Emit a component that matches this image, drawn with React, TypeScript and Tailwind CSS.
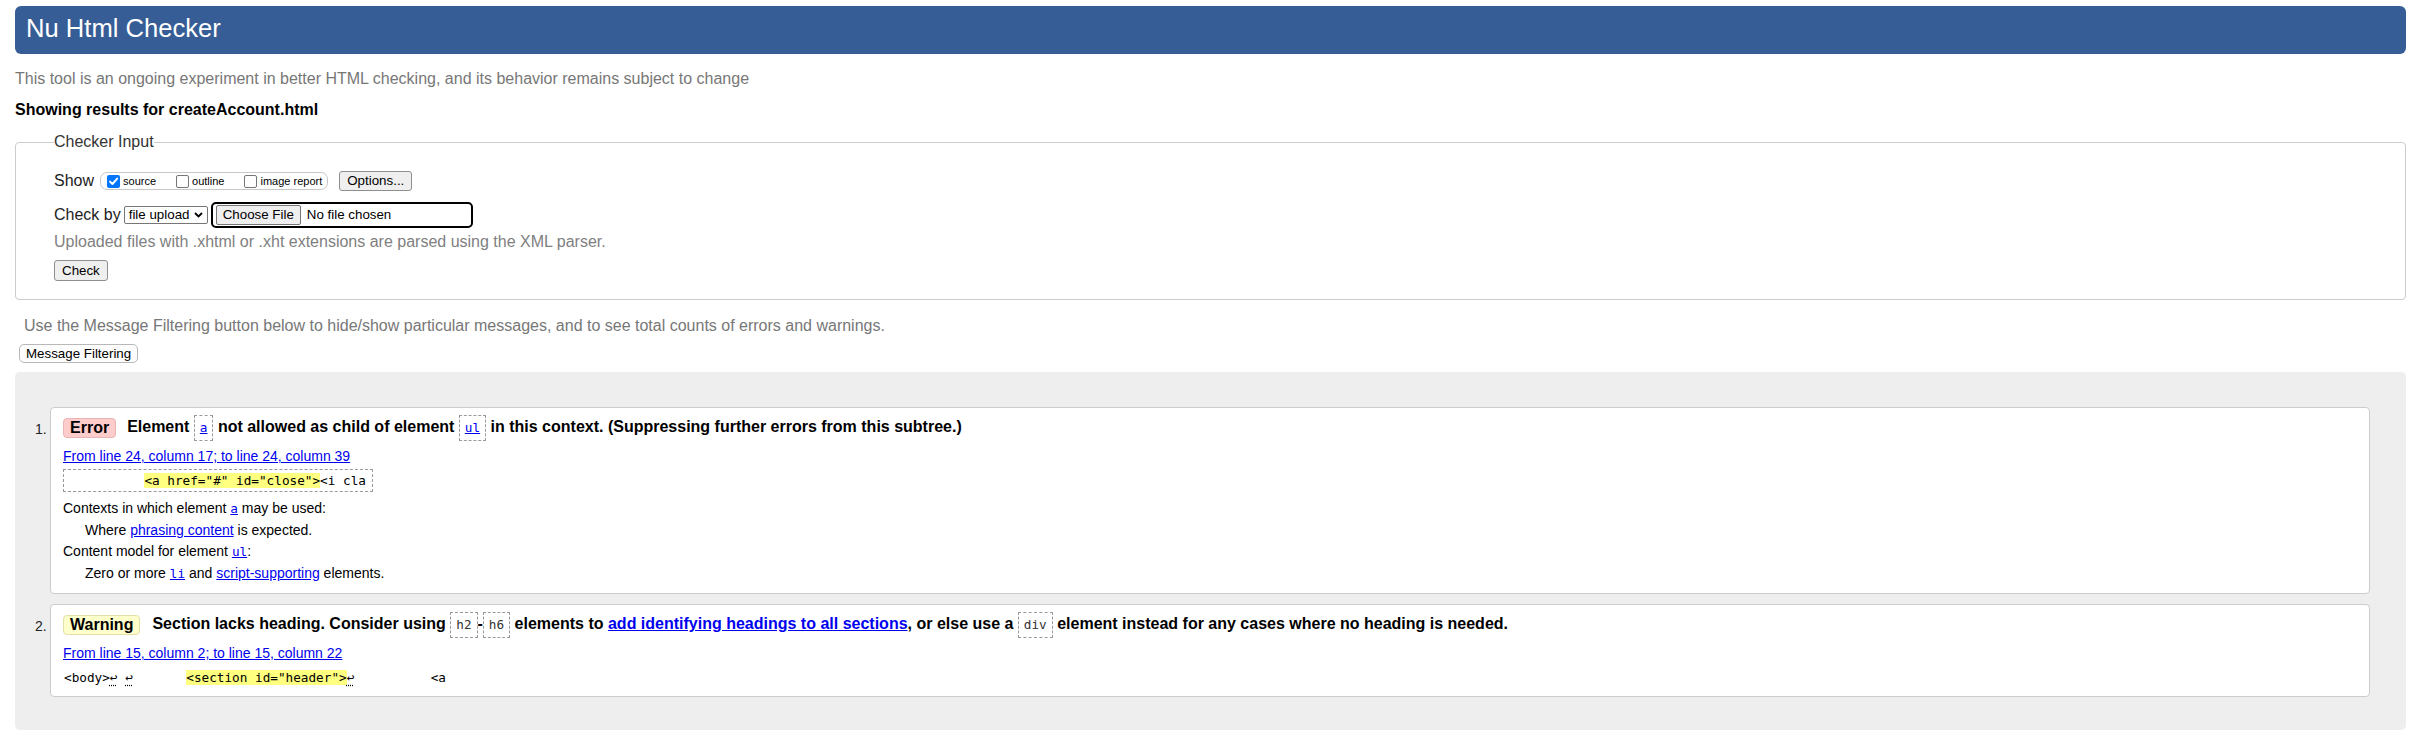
import React from "react";

function Box({ checked }: { checked?: boolean }) {
  return checked ? (
    <span className="inline-flex h-[13px] w-[13px] shrink-0 items-center justify-center rounded-[2px] bg-[#0075ff]">
      <svg width="11" height="11" viewBox="0 0 11 11">
        <path d="M2 5.6 L4.4 8 L9.2 2.6" stroke="white" strokeWidth="1.9" fill="none" strokeLinecap="round" strokeLinejoin="round" />
      </svg>
    </span>
  ) : (
    <span className="inline-block h-[13px] w-[13px] shrink-0 rounded-[2px] border border-[#767676] bg-white" />
  );
}

function Code({ children, link }: { children: React.ReactNode; link?: boolean }) {
  return (
    <span className="inline-block border border-dashed border-[#9a9a9a] px-[5px] py-[4px] align-middle font-['DejaVu_Sans_Mono',monospace] text-[12.7px] font-normal leading-[16px]">
      {link ? <span className="text-[#0000ee] underline">{children}</span> : <span className="text-[#333]">{children}</span>}
    </span>
  );
}

function MonoLink({ children }: { children: React.ReactNode }) {
  return <span className="font-['DejaVu_Sans_Mono',monospace] text-[12.7px] text-[#0000ee] underline">{children}</span>;
}

function Link({ children }: { children: React.ReactNode }) {
  return <span className="text-[#0000ee] underline">{children}</span>;
}

function Ret() {
  return <span className="underline decoration-dotted underline-offset-[3px]">↩</span>;
}

export default function App() {
  return (
    <div className="min-h-screen bg-white pt-[6px] font-['Liberation_Sans',Arial,sans-serif] text-black">
      <div className="ml-[15px] mr-[9px] flex h-[48px] items-center rounded-[6px] bg-[#365d95] pb-[2px] pl-[11px] text-[25.6px] leading-none text-white">
        Nu Html Checker
      </div>

      <p className="ml-[15px] mt-[16px] h-[18px] text-[16px] leading-[18px] text-[#777]">
        This tool is an ongoing experiment in better HTML checking, and its behavior remains subject to change
      </p>
      <p className="ml-[15px] mt-[13px] h-[18px] text-[16px] font-bold leading-[18px]">Showing results for createAccount.html</p>

      <fieldset className="ml-[15px] mr-[9px] mt-[14px] rounded-[4px] border border-[#cccccc] pb-[18px] pl-[38px] pr-[20px]">
        <legend className="text-[16px] leading-[18px] text-[#333]">Checker Input</legend>

        <div className="mt-[20px] flex h-[20px] items-center">
          <span className="text-[16px] leading-[18px] text-[#222]">Show</span>
          <div className="ml-[6px] flex h-[18px] items-center gap-[20px] rounded-[7px] border border-[#c8c8c8] pl-[6px] pr-[5px] text-[11px] leading-[13px]">
            <span className="flex items-center gap-[3px]">
              <Box checked />
              <span>source</span>
            </span>
            <span className="flex items-center gap-[3px]">
              <Box />
              <span>outline</span>
            </span>
            <span className="flex items-center gap-[3px]">
              <Box />
              <span>image report</span>
            </span>
          </div>
          <span className="ml-[11px] flex h-[20px] items-center rounded-[3px] border border-[#8f8f8f] bg-[#efefef] px-[7px] text-[13.33px]">
            Options...
          </span>
        </div>

        <div className="mt-[11px] flex h-[26px] items-center">
          <span className="text-[16px] leading-[18px] text-[#222]">Check by</span>
          <span className="ml-[3px] flex h-[18px] w-[84px] items-center justify-between rounded-[2px] border border-[#767676] pl-[4px] pr-[4px] text-[13.33px]">
            <span>file upload</span>
            <svg width="9" height="6" viewBox="0 0 9 6">
              <path d="M1 1 L4.5 4.5 L8 1" stroke="black" strokeWidth="1.8" fill="none" />
            </svg>
          </span>
          <span className="ml-[3px] flex h-[26px] w-[262px] items-center rounded-[5px] border-2 border-black pl-[3px] text-[13.33px]">
            <span className="flex h-[20px] items-center rounded-[2px] border border-[#767676] bg-[#efefef] px-[6px]">Choose File</span>
            <span className="ml-[6px]">No file chosen</span>
          </span>
        </div>

        <p className="mt-[5px] h-[18px] text-[16px] leading-[18px] text-[#808080]">
          Uploaded files with .xhtml or .xht extensions are parsed using the XML parser.
        </p>

        <div className="mt-[9px] flex">
          <span className="flex h-[21px] items-center rounded-[3px] border border-[#8f8f8f] bg-[#efefef] px-[7px] text-[13.33px]">
            Check
          </span>
        </div>
      </fieldset>

      <p className="ml-[24px] mt-[17px] h-[18px] text-[16px] leading-[18px] text-[#777]">
        Use the Message Filtering button below to hide/show particular messages, and to see total counts of errors and warnings.
      </p>
      <div className="ml-[19px] mt-[9px] flex">
        <span className="flex h-[19px] items-center rounded-[5px] border border-[#b8b8b8] bg-[#fdfdfd] px-[6px] text-[13.33px]">
          Message Filtering
        </span>
      </div>

      <div className="ml-[15px] mr-[9px] mt-[9px] rounded-[5px] bg-[#eeeeee] pb-[33px] pl-[20px] pr-[36px] pt-[35px]">
        {/* Error */}
        <div className="flex">
          <div className="w-[15px] shrink-0 pt-[14px] text-[14px] leading-[16px] text-[#222]">1.</div>
          <div className="flex-1 rounded-[4px] border border-[#cccccc] bg-white pb-[9px] pl-[12px] pt-[9px]">
            <div className="flex h-[22px] items-center whitespace-pre text-[16px] font-bold">
              <span className="flex h-[20px] items-center rounded-[4px] border border-[#eab4b4] bg-[#ffcccc] px-[6px]">Error</span>
              <span className="ml-[11px]">
                Element <Code link>a</Code> not allowed as child of element <Code link>ul</Code> in this context. (Suppressing further errors from this subtree.)
              </span>
            </div>
            <div className="mt-[8px] h-[18px] text-[14px] leading-[18px]">
              <Link>From line 24, column 17; to line 24, column 39</Link>
            </div>
            <div className="mt-[4px] flex">
              <div className="h-[23px] whitespace-pre border border-dashed border-[#9a9a9a] pl-[4px] pr-[6px] font-['DejaVu_Sans_Mono',monospace] text-[12.7px] leading-[21px]">
                {"          "}
                <span className="bg-[#ffff80]">{'<a href="#" id="close">'}</span>
                {"<i cla"}
              </div>
            </div>
            <div className="mt-[6px] text-[14px] leading-[21.5px] text-black">
              <div>
                Contexts in which element <MonoLink>a</MonoLink> may be used:
              </div>
              <div className="pl-[22px]">
                Where <Link>phrasing content</Link> is expected.
              </div>
              <div>
                Content model for element <MonoLink>ul</MonoLink>:
              </div>
              <div className="pl-[22px]">
                Zero or more <MonoLink>li</MonoLink> and <Link>script-supporting</Link> elements.
              </div>
            </div>
          </div>
        </div>

        {/* Warning */}
        <div className="mt-[10px] flex">
          <div className="w-[15px] shrink-0 pt-[14px] text-[14px] leading-[16px] text-[#222]">2.</div>
          <div className="flex-1 rounded-[4px] border border-[#cccccc] bg-white pb-[7px] pl-[12px] pt-[9px]">
            <div className="flex h-[22px] items-center whitespace-pre text-[16px] font-bold">
              <span className="flex h-[20px] items-center rounded-[4px] border border-[#e0e0a8] bg-[#ffffcc] px-[6px]">Warning</span>
              <span className="ml-[12px]">
                Section lacks heading. Consider using <Code>h2</Code>-<Code>h6</Code> elements to{" "}
                <Link>add identifying headings to all sections</Link>, or else use a <Code>div</Code> element instead for any cases where no heading is needed.
              </span>
            </div>
            <div className="mt-[8px] h-[18px] text-[14px] leading-[18px]">
              <Link>From line 15, column 2; to line 15, column 22</Link>
            </div>
            <div className="mt-[4px] flex">
              <div className="h-[23px] whitespace-pre pl-[1px] font-['DejaVu_Sans_Mono',monospace] text-[12.7px] leading-[23px]">
                {"<body>"}
                <Ret />
                {" "}
                <Ret />
                {"       "}
                <span className="bg-[#ffff80]">{'<section id="header">'}</span>
                <Ret />
                {"          <a"}
              </div>
            </div>
          </div>
        </div>
      </div>
    </div>
  );
}
